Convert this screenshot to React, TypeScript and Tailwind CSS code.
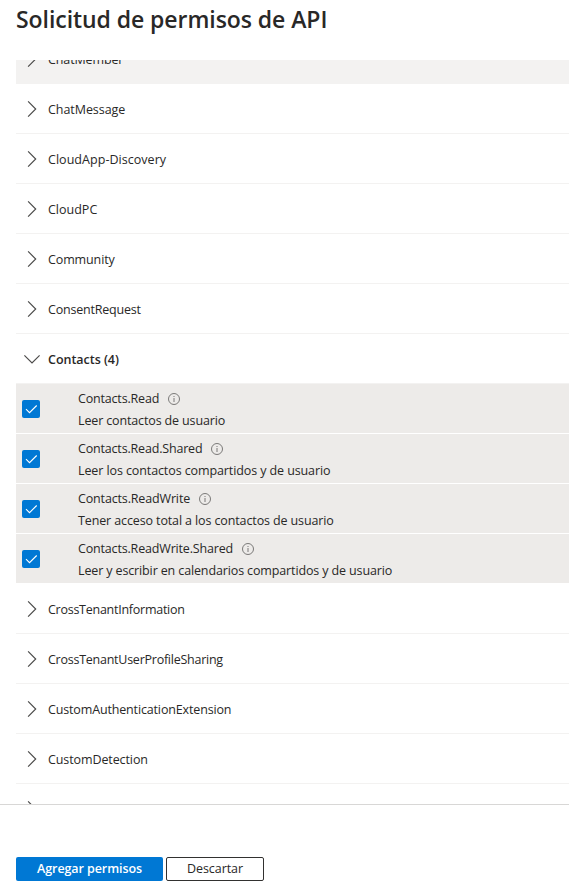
type Group = { name: string; tracking: string };

const before: Group[] = [
  { name: 'ChatMessage', tracking: 'tracking-[-0.06px]' },
  { name: 'CloudApp-Discovery', tracking: 'tracking-[0.04px]' },
  { name: 'CloudPC', tracking: 'tracking-[0px]' },
  { name: 'Community', tracking: 'tracking-[-0.12px]' },
  { name: 'ConsentRequest', tracking: 'tracking-[-0.2px]' },
];

const after: Group[] = [
  { name: 'CrossTenantInformation', tracking: 'tracking-[-0.26px]' },
  { name: 'CrossTenantUserProfileSharing', tracking: 'tracking-[-0.25px]' },
  { name: 'CustomAuthenticationExtension', tracking: 'tracking-[-0.15px]' },
  { name: 'CustomDetection', tracking: 'tracking-[-0.1px]' },
  { name: '', tracking: '' },
];

const permissions = [
  { name: 'Contacts.Read', nt: 'tracking-[-0.18px]', text: 'Leer contactos de usuario', tt: 'tracking-[-0.14px]' },
  { name: 'Contacts.Read.Shared', nt: 'tracking-[-0.18px]', text: 'Leer los contactos compartidos y de usuario', tt: 'tracking-[-0.1px]' },
  { name: 'Contacts.ReadWrite', nt: 'tracking-[-0.15px]', text: 'Tener acceso total a los contactos de usuario', tt: 'tracking-[-0.12px]' },
  { name: 'Contacts.ReadWrite.Shared', nt: 'tracking-[-0.17px]', text: 'Leer y escribir en calendarios compartidos y de usuario', tt: 'tracking-[-0.13px]' },
];

function Chevron({ open = false }: { open?: boolean }) {
  return (
    <svg className="mr-2 h-4 w-4 shrink-0" viewBox="0 0 16 16" fill="none" stroke="#4a4948" strokeWidth="1.15">
      <path d={open ? 'M0.4 4.4 8 12 15.6 4.4' : 'M4.1 0.4 11.7 8 4.1 15.6'} />
    </svg>
  );
}

function InfoIcon() {
  return (
    <svg className="h-3 w-3 shrink-0" viewBox="0 0 12 12" fill="none" stroke="#7a7978">
      <circle cx="6" cy="6" r="5.5" />
      <path d="M6 5v4M6 3v1" />
    </svg>
  );
}

function Row({ name, tracking, hovered = false }: Group & { hovered?: boolean }) {
  return (
    <div className={`flex h-[50px] shrink-0 items-center border-b border-[#f3f2f1] pl-2 ${hovered ? 'bg-[#f3f2f1]' : ''}`}>
      <Chevron />
      <span className={`whitespace-nowrap pt-0.5 ${tracking}`}>{name}</span>
    </div>
  );
}

export default function App() {
  return (
    <div className="flex h-[888px] w-[569px] flex-col overflow-hidden bg-white font-['Open_Sans',sans-serif] text-[12.5px] leading-[18px] text-[#292827]">
      <header className="h-[60px] shrink-0 pl-4 pt-[3px]">
        <h1 className="whitespace-nowrap text-[23px] font-semibold leading-8 tracking-[-0.06px]">
          <span>Solicitud de permisos de API</span>
        </h1>
      </header>
      <main className="flex h-[744px] shrink-0 flex-col overflow-hidden pl-4">
        <div className="-mt-[26px] flex flex-col">
          <Row name="ChatMember" tracking="tracking-[-0.12px]" hovered />
          {before.map((g) => (
            <Row key={g.name} {...g} />
          ))}
          <div className="flex h-[50px] shrink-0 items-center border-b border-[#f3f2f1] pl-2">
            <Chevron open />
            <span className="whitespace-nowrap pt-0.5 font-semibold tracking-[-0.03px]">Contacts (4)</span>
          </div>
          {permissions.map((p) => (
            <div key={p.name} className="flex h-[50px] shrink-0 items-center border-b border-white bg-[#edebe9] pl-1.5">
              <span className="mt-px flex h-[18px] w-[18px] shrink-0 items-center justify-center rounded-[2px] bg-[#0078d4]">
                <svg className="h-[18px] w-[18px]" viewBox="0 0 18 18" fill="none" stroke="white" strokeWidth="1.1">
                  <path d="M4 9.2 7.5 12.7 14.7 5.5" />
                </svg>
              </span>
              <div className="ml-[38px] flex flex-col gap-1 pt-[3px]">
                <div className="flex items-center gap-[9px]">
                  <span className={`whitespace-nowrap ${p.nt}`}>{p.name}</span>
                  <InfoIcon />
                </div>
                <span className={`whitespace-nowrap ${p.tt}`}>{p.text}</span>
              </div>
            </div>
          ))}
          {after.map((g) => (
            <Row key={g.name} {...g} />
          ))}
        </div>
      </main>
      <footer className="flex grow items-start gap-[3px] border-t border-[#d8d7d6] pl-4 pt-[52px]">
        <button className="flex h-6 w-[147px] items-center justify-center whitespace-nowrap rounded-[2px] bg-[#0078d4] pb-px font-semibold tracking-[-0.08px] text-white">
          <span>Agregar permisos</span>
        </button>
        <button className="flex h-6 w-[98px] items-center justify-center rounded-[2px] border border-[#323130] pb-px">
          <span className="tracking-[-0.08px]">Descartar</span>
        </button>
      </footer>
    </div>
  );
}
